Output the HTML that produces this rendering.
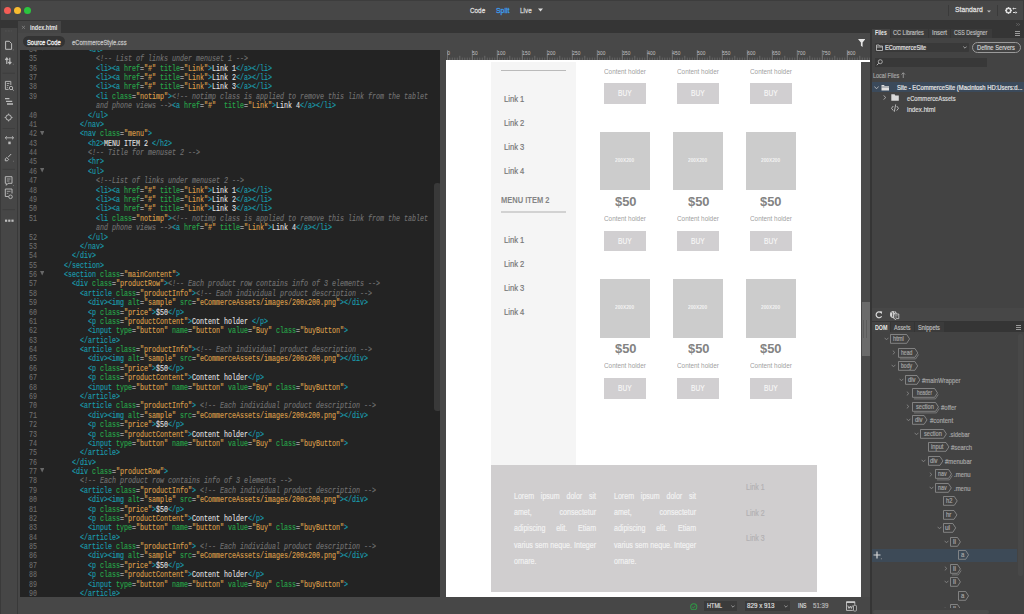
<!DOCTYPE html>
<html><head><meta charset="utf-8">
<style>
*{margin:0;padding:0;box-sizing:border-box}
html,body{width:1024px;height:614px;overflow:hidden;background:#474747;font-family:"Liberation Sans",sans-serif}
.a{position:absolute}
div,svg{position:absolute}
#title{left:0;top:0;width:1024px;height:20px;background:#474747;border-top:1px solid #3d3d3d;border-left:1px solid #3b3b3b}
.tl{width:7px;height:7px;border-radius:50%;top:7px}
.tt{font-size:8px;top:6px;color:#dcdcdc;line-height:9px;white-space:nowrap}
#strip{left:0;top:20px;width:870px;height:13px;background:#353535}
#doctab{left:18px;top:21px;width:43px;height:12px;background:#454545}
#toolbar{left:0;top:28px;width:16.6px;height:586px;background:#464646;border-left:1.2px solid #3a3a3a}
#tbline{left:16.6px;top:28px;width:1.4px;height:586px;background:#393939}
#relbar{left:17.8px;top:33px;width:852.2px;height:17px;background:#484848}
#pill{left:23px;top:36px;width:42px;height:11px;border-radius:6px;background:#333333}
#code{left:20px;top:50px;width:420px;height:547px;background:#232323;overflow:hidden}
.ln{left:17.2px;width:20px;text-align:right;font-family:"Liberation Mono",monospace;font-size:8.8px;line-height:9px;height:9px;color:#6e6e6e;margin-top:-2.2px;white-space:pre;-webkit-text-stroke:0.1px currentColor;transform:scaleX(0.7576);transform-origin:right center}
.fd{left:40px;font-size:4px;line-height:9px;color:#777;margin-top:-4.5px}
.cl{font-family:"Liberation Mono",monospace;font-size:8.8px;line-height:9px;height:9px;margin-top:-2.2px;white-space:pre;color:#e6e6e6;-webkit-text-stroke:0.15px currentColor;transform:scaleX(0.7576);transform-origin:left center}
.cl i{font-style:normal}
.cl .t{color:#1a9cae}
.cl .a{color:#27a64a;position:static}
.cl .e{color:#ababab}
.cl .v{color:#d99e4b}
.cl .x{color:#e2e2e2;-webkit-text-stroke:0.1px currentColor}
.cl .c{color:#717171;font-style:italic}
#cscroll{display:none}
#cthumb{left:414px;top:132.8px;width:6.5px;height:228.7px;background:#393939;border-radius:3px}
#divider{left:440px;top:50px;width:6.5px;height:547px;background:#474747}
#ruler{left:446.5px;top:50px;width:423.5px;height:10px;background:#474747;overflow:hidden}
.rl{top:1px;font-size:4.8px;line-height:5px;color:#c4c4c4;letter-spacing:0.05px}
#page{left:446.2px;top:60px;width:414.5px;height:537px;background:#fff;overflow:hidden}
#wline{left:446.2px;top:60px;width:423.5px;height:1.5px;background:#fff}
#dscroll{left:861px;top:61.5px;width:9px;height:535.5px;background:#4a4a4a}
#dthumb{left:861.5px;top:302px;width:8px;height:54px;background:#6b6b6b}
#pdiv{left:870px;top:20px;width:2px;height:594px;background:#353535}
#panel{left:872px;top:20px;width:152px;height:594px;background:#434343}
#status{left:18px;top:597px;width:852px;height:17px;background:#474747}
.sidebar{left:45.1px;top:1px;width:84.6px;height:404.4px;background:#f5f5f5}
.lk{font-size:8.6px;color:#7c7c7c;line-height:10px;white-space:nowrap}
.ch{width:60px;text-align:center;font-size:7.3px;line-height:11px;color:#a2a2a2;letter-spacing:-0.25px;white-space:nowrap}
.buy{width:42px;height:20.7px;background:#d1cfd1;color:#f4f4f4;font-size:9px;line-height:20.7px;text-align:center}
.img{width:50px;height:58.5px;background:#cccccc}
.img span{position:absolute;left:0;width:50px;top:24px;text-align:center;font-size:4px;line-height:6px;color:#f0f0f0;font-weight:bold}
.price{width:60px;text-align:center;font-size:13.5px;line-height:16px;font-weight:bold;color:#7f7f7f;letter-spacing:-0.3px}
.foot{left:44.5px;top:405.4px;width:325.9px;height:126.6px;background:#d0cecf}
.lorem{width:104.5px;font-size:9px;line-height:9px;color:#f3f3f3;-webkit-text-stroke:0.2px currentColor;text-align:justify;white-space:nowrap;transform:scaleX(0.785);transform-origin:0 0}
.flk{font-size:8px;color:#b5b3b5;line-height:10px;letter-spacing:-0.2px}
.ptxt{font-size:6.4px;line-height:8px;color:#c8c8c8;white-space:nowrap}
.chev{position:absolute}
.tagbox{position:absolute}
.tagtxt{font-size:6.2px;line-height:9px;color:#a8a8a8;text-align:center;white-space:nowrap}
.domlbl{font-size:6.8px;line-height:11px;color:#a8a8a8;white-space:nowrap}
.ico{position:absolute}
</style></head><body>
<!-- title bar -->
<div id="title"></div>
<div class="tl" style="left:4px;background:#f45d56"></div>
<div class="tl" style="left:14px;background:#f8bc30"></div>
<div class="tl" style="left:24px;background:#2bc53f"></div>
<svg style="left:538px;top:8.3px" width="5" height="4" viewBox="0 0 5 4"><path d="M0 0.5H5L2.5 3.5Z" fill="#dcdcdc"/></svg>
<div style="left:948px;top:5px;width:1px;height:11px;background:#3a3a3a"></div>
<div style="left:997px;top:5px;width:1px;height:11px;background:#3a3a3a"></div>
<svg style="left:987px;top:9.5px" width="4" height="3" viewBox="0 0 4 3"><path d="M0 0.5H4L2 2.5Z" fill="#bbbbbb"/></svg>
<svg style="left:1004px;top:5px" width="16" height="11" viewBox="0 0 16 11"><g transform="translate(4.5 5.5)"><circle r="2.25" fill="none" stroke="#dedede" stroke-width="1.5"/><g fill="#dedede"><rect x="-0.6" y="-3.4" width="1.2" height="1.3" transform="rotate(0)"/><rect x="-0.6" y="-3.4" width="1.2" height="1.3" transform="rotate(45)"/><rect x="-0.6" y="-3.4" width="1.2" height="1.3" transform="rotate(90)"/><rect x="-0.6" y="-3.4" width="1.2" height="1.3" transform="rotate(135)"/><rect x="-0.6" y="-3.4" width="1.2" height="1.3" transform="rotate(180)"/><rect x="-0.6" y="-3.4" width="1.2" height="1.3" transform="rotate(225)"/><rect x="-0.6" y="-3.4" width="1.2" height="1.3" transform="rotate(270)"/><rect x="-0.6" y="-3.4" width="1.2" height="1.3" transform="rotate(315)"/></g></g><path d="M8.2 3.6L10 2.4V4.8Z M9.6 3.2H12.2V4H9.6Z M13.4 7.5L11.4 6.3V8.7Z M9 7.1H11.8V7.9H9Z" fill="#dedede"/></svg>
<div style="left:1023px;top:0;width:1px;height:20px;background:#3a3a3a"></div>

<!-- tab strip -->
<div id="strip"></div>
<div id="doctab"></div>
<svg style="left:21px;top:24.5px" width="5" height="5" viewBox="0 0 5 5"><path d="M0.9 0.8L4 3.9M4 0.8L0.9 3.9" stroke="#8c8c8c" stroke-width="0.7"/></svg>

<!-- left toolbar -->
<div id="toolbar"></div>
<div id="tbline"></div>
<svg style="left:0;top:0" width="17" height="230" viewBox="0 0 17 230">
<g fill="none" stroke="#bdbdbd">
<path d="M5 31H12" stroke="#5a5a5a" stroke-width="0.8" stroke-dasharray="0.8 0.7"/>
<path d="M5.6 41.3H9.3L11.6 43.6V49.3H5.6Z" stroke-width="1"/>
<path d="M6.8 64V58.3M5.3 59.8L6.8 58L8.3 59.8M9.8 57.8V63.5M8.3 62L9.8 63.8L11.3 62" stroke-width="1.2"/>
<path d="M2.5 73.3H15" stroke="#3c3c3c" stroke-width="0.8"/>
<path d="M10.8 85V81.4H5.4V89.4H8.6" stroke-width="0.9"/>
<path d="M6.8 83.5H9.4M6.8 85.5H8.6M6.8 87.4H7.8" stroke-width="0.8"/>
<circle cx="11" cy="88" r="1.7" stroke-width="0.9"/><path d="M12.2 89.2L13.6 90.5" stroke-width="1"/>
<path d="M5 98.6H9.4M6 101.3H12.2M7 104H13" stroke-width="1.3"/>
<circle cx="8.6" cy="117.5" r="2.7" stroke-width="1"/>
<path d="M8.6 113.6V114.8M8.6 120.2V121.4M4.7 117.5H5.9M11.3 117.5H12.5" stroke-width="1"/>
<path d="M2.5 128.5H15" stroke="#3c3c3c" stroke-width="0.8"/>
<path d="M5.3 137.8H13.5" stroke-width="0.9"/>
<path d="M6.8 136.3L5.2 137.8L6.8 139.3M12 136.3L13.6 137.8L12 139.3" stroke-width="0.9"/>
<path d="M11.2 154L8 157.3M6.8 157.6L8.7 159.5L7.3 160.8H5.3V158.8Z" stroke-width="1"/>
<path d="M2.5 169.4H15" stroke="#3c3c3c" stroke-width="0.8"/>
<path d="M5.3 176.7H12V183.3H8L6.3 185.3V183.3H5.3Z" stroke-width="0.95"/>
<path d="M6.8 179H10.5M6.8 181H9.5" stroke-width="0.75"/>
<path d="M5.3 196.5V189H12V193.5M8.6 196.5H5.3" stroke-width="0.95"/>
<path d="M6.8 191.3H10.5M6.8 193.3H8.3" stroke-width="0.75"/>
<circle cx="10.5" cy="196.8" r="1.8" stroke-width="0.9"/>
<path d="M2.5 209.6H15" stroke="#3c3c3c" stroke-width="0.8"/>
</g>
<g fill="#bdbdbd">
<rect x="8.3" y="141.6" width="2.4" height="2.6"/>
<path d="M12.6 50.3H13.6V49.3Z M12.6 64.5H13.6V63.5Z M12.8 161.6H13.8V160.6Z M12.8 186H13.8V185Z" fill="#9a9a9a"/>
<rect x="5" y="219.6" width="2.2" height="2.2"/><rect x="8.2" y="219.6" width="2.2" height="2.2"/><rect x="11.4" y="219.6" width="2.2" height="2.2"/>
</g>
</svg>

<!-- related files bar -->
<div id="relbar"></div>
<div id="pill"></div>
<svg style="left:857.5px;top:39px" width="7.5" height="8" viewBox="0 0 7.5 8"><path d="M0 0H7.5L4.6 3.6V8L2.9 6.8V3.6Z" fill="#e6e6e6"/></svg>

<div style="left:469.80px;top:6.86px;font:normal 8.00px/8.00px 'Liberation Sans';color:#dcdcdc;white-space:pre;transform:scaleX(0.793);transform-origin:0 0;-webkit-text-stroke:0.3px currentColor;">Code</div>
<div style="left:495.80px;top:6.86px;font:normal 8.00px/8.00px 'Liberation Sans';color:#3d9ef0;white-space:pre;transform:scaleX(0.857);transform-origin:0 0;-webkit-text-stroke:0.3px currentColor;">Split</div>
<div style="left:519.80px;top:6.86px;font:normal 8.00px/8.00px 'Liberation Sans';color:#d0d0d0;white-space:pre;transform:scaleX(0.795);transform-origin:0 0;-webkit-text-stroke:0.3px currentColor;">Live</div>
<div style="left:954.80px;top:6.46px;font:normal 8.00px/8.00px 'Liberation Sans';color:#dddddd;white-space:pre;transform:scaleX(0.853);transform-origin:0 0;-webkit-text-stroke:0.3px currentColor;">Standard</div>
<div style="left:29.80px;top:23.64px;font:bold 7.00px/7.00px 'Liberation Sans';color:#e8e8e8;white-space:pre;transform:scaleX(0.782);transform-origin:0 0;">index.html</div>
<div style="left:26.70px;top:38.65px;font:normal 7.40px/7.40px 'Liberation Sans';color:#ececec;white-space:pre;transform:scaleX(0.779);transform-origin:0 0;-webkit-text-stroke:0.3px currentColor;">Source Code</div>
<div style="left:72.20px;top:38.65px;font:normal 7.40px/7.40px 'Liberation Sans';color:#bdbdbd;white-space:pre;transform:scaleX(0.781);transform-origin:0 0;-webkit-text-stroke:0.3px currentColor;">eCommerceStyle.css</div>
<!-- code view -->
<div id="code">
<div style="left:-20px;top:-50px;width:440px;height:647px">
<div class="ln" style="top:48.12px">34</div>
<svg style="left:40.1px;top:46.32px" width="4.4" height="4.6" viewBox="0 0 4.4 4.6"><path d="M0 0H4.4L2.2 4.6Z" fill="#686868"/></svg>
<div class="cl" style="top:48.12px;left:87.70px"><i class="t">&lt;ul</i><i class="t">&gt;</i></div>
<div class="ln" style="top:57.50px">35</div>
<div class="cl" style="top:57.50px;left:95.70px"><i class="c">&lt;!-- List of links under menuset 1 --&gt;</i></div>
<div class="ln" style="top:66.88px">36</div>
<div class="cl" style="top:66.88px;left:95.70px"><i class="t">&lt;li</i><i class="t">&gt;</i><i class="t">&lt;a</i> <i class="a">href</i><i class="e">=</i><i class="v">"#"</i> <i class="a">title</i><i class="e">=</i><i class="v">"Link"</i><i class="t">&gt;</i><i class="x">Link 1</i><i class="t">&lt;/a</i><i class="t">&gt;</i><i class="t">&lt;/li</i><i class="t">&gt;</i></div>
<div class="ln" style="top:76.26px">37</div>
<div class="cl" style="top:76.26px;left:95.70px"><i class="t">&lt;li</i><i class="t">&gt;</i><i class="t">&lt;a</i> <i class="a">href</i><i class="e">=</i><i class="v">"#"</i> <i class="a">title</i><i class="e">=</i><i class="v">"Link"</i><i class="t">&gt;</i><i class="x">Link 2</i><i class="t">&lt;/a</i><i class="t">&gt;</i><i class="t">&lt;/li</i><i class="t">&gt;</i></div>
<div class="ln" style="top:85.64px">38</div>
<div class="cl" style="top:85.64px;left:95.70px"><i class="t">&lt;li</i><i class="t">&gt;</i><i class="t">&lt;a</i> <i class="a">href</i><i class="e">=</i><i class="v">"#"</i> <i class="a">title</i><i class="e">=</i><i class="v">"Link"</i><i class="t">&gt;</i><i class="x">Link 3</i><i class="t">&lt;/a</i><i class="t">&gt;</i><i class="t">&lt;/li</i><i class="t">&gt;</i></div>
<div class="ln" style="top:95.02px">39</div>
<div class="cl" style="top:95.02px;left:95.70px"><i class="t">&lt;li</i> <i class="a">class</i><i class="e">=</i><i class="v">"notimp"</i><i class="t">&gt;</i><i class="c">&lt;!-- notimp class is applied to remove this link from the tablet</i></div>
<div class="cl" style="top:104.40px;left:95.70px"><i class="c">and phone views --&gt;</i><i class="t">&lt;a</i> <i class="a">href</i><i class="e">=</i><i class="v">"#"</i>  <i class="a">title</i><i class="e">=</i><i class="v">"Link"</i><i class="t">&gt;</i><i class="x">Link 4</i><i class="t">&lt;/a</i><i class="t">&gt;</i><i class="t">&lt;/li</i><i class="t">&gt;</i></div>
<div class="ln" style="top:113.78px">40</div>
<div class="cl" style="top:113.78px;left:87.70px"><i class="t">&lt;/ul</i><i class="t">&gt;</i></div>
<div class="ln" style="top:123.16px">41</div>
<div class="cl" style="top:123.16px;left:79.70px"><i class="t">&lt;/nav</i><i class="t">&gt;</i></div>
<div class="ln" style="top:132.54px">42</div>
<svg style="left:40.1px;top:130.74px" width="4.4" height="4.6" viewBox="0 0 4.4 4.6"><path d="M0 0H4.4L2.2 4.6Z" fill="#686868"/></svg>
<div class="cl" style="top:132.54px;left:79.70px"><i class="t">&lt;nav</i> <i class="a">class</i><i class="e">=</i><i class="v">"menu"</i><i class="t">&gt;</i></div>
<div class="ln" style="top:141.92px">43</div>
<div class="cl" style="top:141.92px;left:87.70px"><i class="t">&lt;h2</i><i class="t">&gt;</i><i class="x">MENU ITEM 2 </i><i class="t">&lt;/h2</i><i class="t">&gt;</i></div>
<div class="ln" style="top:151.30px">44</div>
<div class="cl" style="top:151.30px;left:87.70px"><i class="c">&lt;!-- Title for menuset 2 --&gt;</i></div>
<div class="ln" style="top:160.68px">45</div>
<div class="cl" style="top:160.68px;left:87.70px"><i class="t">&lt;hr</i><i class="t">&gt;</i></div>
<div class="ln" style="top:170.06px">46</div>
<svg style="left:40.1px;top:168.26px" width="4.4" height="4.6" viewBox="0 0 4.4 4.6"><path d="M0 0H4.4L2.2 4.6Z" fill="#686868"/></svg>
<div class="cl" style="top:170.06px;left:87.70px"><i class="t">&lt;ul</i><i class="t">&gt;</i></div>
<div class="ln" style="top:179.44px">47</div>
<div class="cl" style="top:179.44px;left:95.70px"><i class="c">&lt;!--List of links under menuset 2 --&gt;</i></div>
<div class="ln" style="top:188.82px">48</div>
<div class="cl" style="top:188.82px;left:95.70px"><i class="t">&lt;li</i><i class="t">&gt;</i><i class="t">&lt;a</i> <i class="a">href</i><i class="e">=</i><i class="v">"#"</i> <i class="a">title</i><i class="e">=</i><i class="v">"Link"</i><i class="t">&gt;</i><i class="x">Link 1</i><i class="t">&lt;/a</i><i class="t">&gt;</i><i class="t">&lt;/li</i><i class="t">&gt;</i></div>
<div class="ln" style="top:198.20px">49</div>
<div class="cl" style="top:198.20px;left:95.70px"><i class="t">&lt;li</i><i class="t">&gt;</i><i class="t">&lt;a</i> <i class="a">href</i><i class="e">=</i><i class="v">"#"</i> <i class="a">title</i><i class="e">=</i><i class="v">"Link"</i><i class="t">&gt;</i><i class="x">Link 2</i><i class="t">&lt;/a</i><i class="t">&gt;</i><i class="t">&lt;/li</i><i class="t">&gt;</i></div>
<div class="ln" style="top:207.58px">50</div>
<div class="cl" style="top:207.58px;left:95.70px"><i class="t">&lt;li</i><i class="t">&gt;</i><i class="t">&lt;a</i> <i class="a">href</i><i class="e">=</i><i class="v">"#"</i> <i class="a">title</i><i class="e">=</i><i class="v">"Link"</i><i class="t">&gt;</i><i class="x">Link 3</i><i class="t">&lt;/a</i><i class="t">&gt;</i><i class="t">&lt;/li</i><i class="t">&gt;</i></div>
<div class="ln" style="top:216.96px">51</div>
<div class="cl" style="top:216.96px;left:95.70px"><i class="t">&lt;li</i> <i class="a">class</i><i class="e">=</i><i class="v">"notimp"</i><i class="t">&gt;</i><i class="c">&lt;!-- notimp class is applied to remove this link from the tablet</i></div>
<div class="cl" style="top:226.34px;left:95.70px"><i class="c">and phone views --&gt;</i><i class="t">&lt;a</i> <i class="a">href</i><i class="e">=</i><i class="v">"#"</i> <i class="a">title</i><i class="e">=</i><i class="v">"Link"</i><i class="t">&gt;</i><i class="x">Link 4</i><i class="t">&lt;/a</i><i class="t">&gt;</i><i class="t">&lt;/li</i><i class="t">&gt;</i></div>
<div class="ln" style="top:235.72px">52</div>
<div class="cl" style="top:235.72px;left:87.70px"><i class="t">&lt;/ul</i><i class="t">&gt;</i></div>
<div class="ln" style="top:245.10px">53</div>
<div class="cl" style="top:245.10px;left:79.70px"><i class="t">&lt;/nav</i><i class="t">&gt;</i></div>
<div class="ln" style="top:254.48px">54</div>
<div class="cl" style="top:254.48px;left:71.70px"><i class="t">&lt;/div</i><i class="t">&gt;</i></div>
<div class="ln" style="top:263.86px">55</div>
<div class="cl" style="top:263.86px;left:63.70px"><i class="t">&lt;/section</i><i class="t">&gt;</i></div>
<div class="ln" style="top:273.24px">56</div>
<svg style="left:40.1px;top:271.44px" width="4.4" height="4.6" viewBox="0 0 4.4 4.6"><path d="M0 0H4.4L2.2 4.6Z" fill="#686868"/></svg>
<div class="cl" style="top:273.24px;left:63.70px"><i class="t">&lt;section</i> <i class="a">class</i><i class="e">=</i><i class="v">"mainContent"</i><i class="t">&gt;</i></div>
<div class="ln" style="top:282.62px">57</div>
<div class="cl" style="top:282.62px;left:71.70px"><i class="t">&lt;div</i> <i class="a">class</i><i class="e">=</i><i class="v">"productRow"</i><i class="t">&gt;</i><i class="c">&lt;!-- Each product row contains info of 3 elements --&gt;</i></div>
<div class="ln" style="top:292.00px">58</div>
<div class="cl" style="top:292.00px;left:79.70px"><i class="t">&lt;article</i> <i class="a">class</i><i class="e">=</i><i class="v">"productInfo"</i><i class="t">&gt;</i><i class="c">&lt;!-- Each individual product description --&gt;</i></div>
<div class="ln" style="top:301.38px">59</div>
<div class="cl" style="top:301.38px;left:87.70px"><i class="t">&lt;div</i><i class="t">&gt;</i><i class="t">&lt;img</i> <i class="a">alt</i><i class="e">=</i><i class="v">"sample"</i> <i class="a">src</i><i class="e">=</i><i class="v">"eCommerceAssets/images/200x200.png"</i><i class="t">&gt;</i><i class="t">&lt;/div</i><i class="t">&gt;</i></div>
<div class="ln" style="top:310.76px">60</div>
<div class="cl" style="top:310.76px;left:87.70px"><i class="t">&lt;p</i> <i class="a">class</i><i class="e">=</i><i class="v">"price"</i><i class="t">&gt;</i><i class="x">$50</i><i class="t">&lt;/p</i><i class="t">&gt;</i></div>
<div class="ln" style="top:320.14px">61</div>
<div class="cl" style="top:320.14px;left:87.70px"><i class="t">&lt;p</i> <i class="a">class</i><i class="e">=</i><i class="v">"productContent"</i><i class="t">&gt;</i><i class="x">Content holder </i><i class="t">&lt;/p</i><i class="t">&gt;</i></div>
<div class="ln" style="top:329.52px">62</div>
<div class="cl" style="top:329.52px;left:87.70px"><i class="t">&lt;input</i> <i class="a">type</i><i class="e">=</i><i class="v">"button"</i> <i class="a">name</i><i class="e">=</i><i class="v">"button"</i> <i class="a">value</i><i class="e">=</i><i class="v">"Buy"</i> <i class="a">class</i><i class="e">=</i><i class="v">"buyButton"</i><i class="t">&gt;</i></div>
<div class="ln" style="top:338.90px">63</div>
<div class="cl" style="top:338.90px;left:79.70px"><i class="t">&lt;/article</i><i class="t">&gt;</i></div>
<div class="ln" style="top:348.28px">64</div>
<div class="cl" style="top:348.28px;left:79.70px"><i class="t">&lt;article</i> <i class="a">class</i><i class="e">=</i><i class="v">"productInfo"</i><i class="t">&gt;</i><i class="c">&lt;!-- Each individual product description --&gt;</i></div>
<div class="ln" style="top:357.66px">65</div>
<div class="cl" style="top:357.66px;left:87.70px"><i class="t">&lt;div</i><i class="t">&gt;</i><i class="t">&lt;img</i> <i class="a">alt</i><i class="e">=</i><i class="v">"sample"</i> <i class="a">src</i><i class="e">=</i><i class="v">"eCommerceAssets/images/200x200.png"</i><i class="t">&gt;</i><i class="t">&lt;/div</i><i class="t">&gt;</i></div>
<div class="ln" style="top:367.04px">66</div>
<div class="cl" style="top:367.04px;left:87.70px"><i class="t">&lt;p</i> <i class="a">class</i><i class="e">=</i><i class="v">"price"</i><i class="t">&gt;</i><i class="x">$50</i><i class="t">&lt;/p</i><i class="t">&gt;</i></div>
<div class="ln" style="top:376.42px">67</div>
<div class="cl" style="top:376.42px;left:87.70px"><i class="t">&lt;p</i> <i class="a">class</i><i class="e">=</i><i class="v">"productContent"</i><i class="t">&gt;</i><i class="x">Content holder</i><i class="t">&lt;/p</i><i class="t">&gt;</i></div>
<div class="ln" style="top:385.80px">68</div>
<div class="cl" style="top:385.80px;left:87.70px"><i class="t">&lt;input</i> <i class="a">type</i><i class="e">=</i><i class="v">"button"</i> <i class="a">name</i><i class="e">=</i><i class="v">"button"</i> <i class="a">value</i><i class="e">=</i><i class="v">"Buy"</i> <i class="a">class</i><i class="e">=</i><i class="v">"buyButton"</i><i class="t">&gt;</i></div>
<div class="ln" style="top:395.18px">69</div>
<div class="cl" style="top:395.18px;left:79.70px"><i class="t">&lt;/article</i><i class="t">&gt;</i></div>
<div class="ln" style="top:404.56px">70</div>
<div class="cl" style="top:404.56px;left:79.70px"><i class="t">&lt;article</i> <i class="a">class</i><i class="e">=</i><i class="v">"productInfo"</i><i class="t">&gt;</i><i class="x"> </i><i class="c">&lt;!-- Each individual product description --&gt;</i></div>
<div class="ln" style="top:413.94px">71</div>
<div class="cl" style="top:413.94px;left:87.70px"><i class="t">&lt;div</i><i class="t">&gt;</i><i class="t">&lt;img</i> <i class="a">alt</i><i class="e">=</i><i class="v">"sample"</i> <i class="a">src</i><i class="e">=</i><i class="v">"eCommerceAssets/images/200x200.png"</i><i class="t">&gt;</i><i class="t">&lt;/div</i><i class="t">&gt;</i></div>
<div class="ln" style="top:423.32px">72</div>
<div class="cl" style="top:423.32px;left:87.70px"><i class="t">&lt;p</i> <i class="a">class</i><i class="e">=</i><i class="v">"price"</i><i class="t">&gt;</i><i class="x">$50</i><i class="t">&lt;/p</i><i class="t">&gt;</i></div>
<div class="ln" style="top:432.70px">73</div>
<div class="cl" style="top:432.70px;left:87.70px"><i class="t">&lt;p</i> <i class="a">class</i><i class="e">=</i><i class="v">"productContent"</i><i class="t">&gt;</i><i class="x">Content holder</i><i class="t">&lt;/p</i><i class="t">&gt;</i></div>
<div class="ln" style="top:442.08px">74</div>
<div class="cl" style="top:442.08px;left:87.70px"><i class="t">&lt;input</i> <i class="a">type</i><i class="e">=</i><i class="v">"button"</i> <i class="a">name</i><i class="e">=</i><i class="v">"button"</i> <i class="a">value</i><i class="e">=</i><i class="v">"Buy"</i> <i class="a">class</i><i class="e">=</i><i class="v">"buyButton"</i><i class="t">&gt;</i></div>
<div class="ln" style="top:451.46px">75</div>
<div class="cl" style="top:451.46px;left:79.70px"><i class="t">&lt;/article</i><i class="t">&gt;</i></div>
<div class="ln" style="top:460.84px">76</div>
<div class="cl" style="top:460.84px;left:71.70px"><i class="t">&lt;/div</i><i class="t">&gt;</i></div>
<div class="ln" style="top:470.22px">77</div>
<svg style="left:40.1px;top:468.42px" width="4.4" height="4.6" viewBox="0 0 4.4 4.6"><path d="M0 0H4.4L2.2 4.6Z" fill="#686868"/></svg>
<div class="cl" style="top:470.22px;left:71.70px"><i class="t">&lt;div</i> <i class="a">class</i><i class="e">=</i><i class="v">"productRow"</i><i class="t">&gt;</i></div>
<div class="ln" style="top:479.60px">78</div>
<div class="cl" style="top:479.60px;left:79.70px"><i class="c">&lt;!-- Each product row contains info of 3 elements --&gt;</i></div>
<div class="ln" style="top:488.98px">79</div>
<div class="cl" style="top:488.98px;left:79.70px"><i class="t">&lt;article</i> <i class="a">class</i><i class="e">=</i><i class="v">"productInfo"</i><i class="t">&gt;</i><i class="x"> </i><i class="c">&lt;!-- Each individual product description --&gt;</i></div>
<div class="ln" style="top:498.36px">80</div>
<div class="cl" style="top:498.36px;left:87.70px"><i class="t">&lt;div</i><i class="t">&gt;</i><i class="t">&lt;img</i> <i class="a">alt</i><i class="e">=</i><i class="v">"sample"</i> <i class="a">src</i><i class="e">=</i><i class="v">"eCommerceAssets/images/200x200.png"</i><i class="t">&gt;</i><i class="t">&lt;/div</i><i class="t">&gt;</i></div>
<div class="ln" style="top:507.74px">81</div>
<div class="cl" style="top:507.74px;left:87.70px"><i class="t">&lt;p</i> <i class="a">class</i><i class="e">=</i><i class="v">"price"</i><i class="t">&gt;</i><i class="x">$50</i><i class="t">&lt;/p</i><i class="t">&gt;</i></div>
<div class="ln" style="top:517.12px">82</div>
<div class="cl" style="top:517.12px;left:87.70px"><i class="t">&lt;p</i> <i class="a">class</i><i class="e">=</i><i class="v">"productContent"</i><i class="t">&gt;</i><i class="x">Content holder</i><i class="t">&lt;/p</i><i class="t">&gt;</i></div>
<div class="ln" style="top:526.50px">83</div>
<div class="cl" style="top:526.50px;left:87.70px"><i class="t">&lt;input</i> <i class="a">type</i><i class="e">=</i><i class="v">"button"</i> <i class="a">name</i><i class="e">=</i><i class="v">"button"</i> <i class="a">value</i><i class="e">=</i><i class="v">"Buy"</i> <i class="a">class</i><i class="e">=</i><i class="v">"buyButton"</i><i class="t">&gt;</i></div>
<div class="ln" style="top:535.88px">84</div>
<div class="cl" style="top:535.88px;left:79.70px"><i class="t">&lt;/article</i><i class="t">&gt;</i></div>
<div class="ln" style="top:545.26px">85</div>
<div class="cl" style="top:545.26px;left:79.70px"><i class="t">&lt;article</i> <i class="a">class</i><i class="e">=</i><i class="v">"productInfo"</i><i class="t">&gt;</i><i class="x"> </i><i class="c">&lt;!-- Each individual product description --&gt;</i></div>
<div class="ln" style="top:554.64px">86</div>
<div class="cl" style="top:554.64px;left:87.70px"><i class="t">&lt;div</i><i class="t">&gt;</i><i class="t">&lt;img</i> <i class="a">alt</i><i class="e">=</i><i class="v">"sample"</i> <i class="a">src</i><i class="e">=</i><i class="v">"eCommerceAssets/images/200x200.png"</i><i class="t">&gt;</i><i class="t">&lt;/div</i><i class="t">&gt;</i></div>
<div class="ln" style="top:564.02px">87</div>
<div class="cl" style="top:564.02px;left:87.70px"><i class="t">&lt;p</i> <i class="a">class</i><i class="e">=</i><i class="v">"price"</i><i class="t">&gt;</i><i class="x">$50</i><i class="t">&lt;/p</i><i class="t">&gt;</i></div>
<div class="ln" style="top:573.40px">88</div>
<div class="cl" style="top:573.40px;left:87.70px"><i class="t">&lt;p</i> <i class="a">class</i><i class="e">=</i><i class="v">"productContent"</i><i class="t">&gt;</i><i class="x">Content holder</i><i class="t">&lt;/p</i><i class="t">&gt;</i></div>
<div class="ln" style="top:582.78px">89</div>
<div class="cl" style="top:582.78px;left:87.70px"><i class="t">&lt;input</i> <i class="a">type</i><i class="e">=</i><i class="v">"button"</i> <i class="a">name</i><i class="e">=</i><i class="v">"button"</i> <i class="a">value</i><i class="e">=</i><i class="v">"Buy"</i> <i class="a">class</i><i class="e">=</i><i class="v">"buyButton"</i><i class="t">&gt;</i></div>
<div class="ln" style="top:592.16px">90</div>
<div class="cl" style="top:592.16px;left:79.70px"><i class="t">&lt;/article</i><i class="t">&gt;</i></div>
</div>
<div id="cscroll"></div>
<div id="cthumb"></div>
</div>

<div id="divider"></div>

<!-- ruler -->
<div id="ruler">
<svg style="left:0;top:0" width="424" height="10" viewBox="0 0 424 10">
<line x1="0.30" y1="0" x2="0.30" y2="10" stroke="#a0a0a0" stroke-width="0.55"/>
<line x1="2.80" y1="7.6" x2="2.80" y2="10" stroke="#858585" stroke-width="0.5"/>
<line x1="5.30" y1="7.6" x2="5.30" y2="10" stroke="#858585" stroke-width="0.5"/>
<line x1="7.80" y1="7.6" x2="7.80" y2="10" stroke="#858585" stroke-width="0.5"/>
<line x1="10.30" y1="7.6" x2="10.30" y2="10" stroke="#858585" stroke-width="0.5"/>
<line x1="12.80" y1="5.8" x2="12.80" y2="10" stroke="#8c8c8c" stroke-width="0.5"/>
<line x1="15.30" y1="7.6" x2="15.30" y2="10" stroke="#858585" stroke-width="0.5"/>
<line x1="17.80" y1="7.6" x2="17.80" y2="10" stroke="#858585" stroke-width="0.5"/>
<line x1="20.30" y1="7.6" x2="20.30" y2="10" stroke="#858585" stroke-width="0.5"/>
<line x1="22.80" y1="7.6" x2="22.80" y2="10" stroke="#858585" stroke-width="0.5"/>
<line x1="25.30" y1="0" x2="25.30" y2="10" stroke="#a0a0a0" stroke-width="0.55"/>
<line x1="27.80" y1="7.6" x2="27.80" y2="10" stroke="#858585" stroke-width="0.5"/>
<line x1="30.30" y1="7.6" x2="30.30" y2="10" stroke="#858585" stroke-width="0.5"/>
<line x1="32.80" y1="7.6" x2="32.80" y2="10" stroke="#858585" stroke-width="0.5"/>
<line x1="35.30" y1="7.6" x2="35.30" y2="10" stroke="#858585" stroke-width="0.5"/>
<line x1="37.80" y1="5.8" x2="37.80" y2="10" stroke="#8c8c8c" stroke-width="0.5"/>
<line x1="40.30" y1="7.6" x2="40.30" y2="10" stroke="#858585" stroke-width="0.5"/>
<line x1="42.80" y1="7.6" x2="42.80" y2="10" stroke="#858585" stroke-width="0.5"/>
<line x1="45.30" y1="7.6" x2="45.30" y2="10" stroke="#858585" stroke-width="0.5"/>
<line x1="47.80" y1="7.6" x2="47.80" y2="10" stroke="#858585" stroke-width="0.5"/>
<line x1="50.30" y1="0" x2="50.30" y2="10" stroke="#a0a0a0" stroke-width="0.55"/>
<line x1="52.80" y1="7.6" x2="52.80" y2="10" stroke="#858585" stroke-width="0.5"/>
<line x1="55.30" y1="7.6" x2="55.30" y2="10" stroke="#858585" stroke-width="0.5"/>
<line x1="57.80" y1="7.6" x2="57.80" y2="10" stroke="#858585" stroke-width="0.5"/>
<line x1="60.30" y1="7.6" x2="60.30" y2="10" stroke="#858585" stroke-width="0.5"/>
<line x1="62.80" y1="5.8" x2="62.80" y2="10" stroke="#8c8c8c" stroke-width="0.5"/>
<line x1="65.30" y1="7.6" x2="65.30" y2="10" stroke="#858585" stroke-width="0.5"/>
<line x1="67.80" y1="7.6" x2="67.80" y2="10" stroke="#858585" stroke-width="0.5"/>
<line x1="70.30" y1="7.6" x2="70.30" y2="10" stroke="#858585" stroke-width="0.5"/>
<line x1="72.80" y1="7.6" x2="72.80" y2="10" stroke="#858585" stroke-width="0.5"/>
<line x1="75.30" y1="0" x2="75.30" y2="10" stroke="#a0a0a0" stroke-width="0.55"/>
<line x1="77.80" y1="7.6" x2="77.80" y2="10" stroke="#858585" stroke-width="0.5"/>
<line x1="80.30" y1="7.6" x2="80.30" y2="10" stroke="#858585" stroke-width="0.5"/>
<line x1="82.80" y1="7.6" x2="82.80" y2="10" stroke="#858585" stroke-width="0.5"/>
<line x1="85.30" y1="7.6" x2="85.30" y2="10" stroke="#858585" stroke-width="0.5"/>
<line x1="87.80" y1="5.8" x2="87.80" y2="10" stroke="#8c8c8c" stroke-width="0.5"/>
<line x1="90.30" y1="7.6" x2="90.30" y2="10" stroke="#858585" stroke-width="0.5"/>
<line x1="92.80" y1="7.6" x2="92.80" y2="10" stroke="#858585" stroke-width="0.5"/>
<line x1="95.30" y1="7.6" x2="95.30" y2="10" stroke="#858585" stroke-width="0.5"/>
<line x1="97.80" y1="7.6" x2="97.80" y2="10" stroke="#858585" stroke-width="0.5"/>
<line x1="100.30" y1="0" x2="100.30" y2="10" stroke="#a0a0a0" stroke-width="0.55"/>
<line x1="102.80" y1="7.6" x2="102.80" y2="10" stroke="#858585" stroke-width="0.5"/>
<line x1="105.30" y1="7.6" x2="105.30" y2="10" stroke="#858585" stroke-width="0.5"/>
<line x1="107.80" y1="7.6" x2="107.80" y2="10" stroke="#858585" stroke-width="0.5"/>
<line x1="110.30" y1="7.6" x2="110.30" y2="10" stroke="#858585" stroke-width="0.5"/>
<line x1="112.80" y1="5.8" x2="112.80" y2="10" stroke="#8c8c8c" stroke-width="0.5"/>
<line x1="115.30" y1="7.6" x2="115.30" y2="10" stroke="#858585" stroke-width="0.5"/>
<line x1="117.80" y1="7.6" x2="117.80" y2="10" stroke="#858585" stroke-width="0.5"/>
<line x1="120.30" y1="7.6" x2="120.30" y2="10" stroke="#858585" stroke-width="0.5"/>
<line x1="122.80" y1="7.6" x2="122.80" y2="10" stroke="#858585" stroke-width="0.5"/>
<line x1="125.30" y1="0" x2="125.30" y2="10" stroke="#a0a0a0" stroke-width="0.55"/>
<line x1="127.80" y1="7.6" x2="127.80" y2="10" stroke="#858585" stroke-width="0.5"/>
<line x1="130.30" y1="7.6" x2="130.30" y2="10" stroke="#858585" stroke-width="0.5"/>
<line x1="132.80" y1="7.6" x2="132.80" y2="10" stroke="#858585" stroke-width="0.5"/>
<line x1="135.30" y1="7.6" x2="135.30" y2="10" stroke="#858585" stroke-width="0.5"/>
<line x1="137.80" y1="5.8" x2="137.80" y2="10" stroke="#8c8c8c" stroke-width="0.5"/>
<line x1="140.30" y1="7.6" x2="140.30" y2="10" stroke="#858585" stroke-width="0.5"/>
<line x1="142.80" y1="7.6" x2="142.80" y2="10" stroke="#858585" stroke-width="0.5"/>
<line x1="145.30" y1="7.6" x2="145.30" y2="10" stroke="#858585" stroke-width="0.5"/>
<line x1="147.80" y1="7.6" x2="147.80" y2="10" stroke="#858585" stroke-width="0.5"/>
<line x1="150.30" y1="0" x2="150.30" y2="10" stroke="#a0a0a0" stroke-width="0.55"/>
<line x1="152.80" y1="7.6" x2="152.80" y2="10" stroke="#858585" stroke-width="0.5"/>
<line x1="155.30" y1="7.6" x2="155.30" y2="10" stroke="#858585" stroke-width="0.5"/>
<line x1="157.80" y1="7.6" x2="157.80" y2="10" stroke="#858585" stroke-width="0.5"/>
<line x1="160.30" y1="7.6" x2="160.30" y2="10" stroke="#858585" stroke-width="0.5"/>
<line x1="162.80" y1="5.8" x2="162.80" y2="10" stroke="#8c8c8c" stroke-width="0.5"/>
<line x1="165.30" y1="7.6" x2="165.30" y2="10" stroke="#858585" stroke-width="0.5"/>
<line x1="167.80" y1="7.6" x2="167.80" y2="10" stroke="#858585" stroke-width="0.5"/>
<line x1="170.30" y1="7.6" x2="170.30" y2="10" stroke="#858585" stroke-width="0.5"/>
<line x1="172.80" y1="7.6" x2="172.80" y2="10" stroke="#858585" stroke-width="0.5"/>
<line x1="175.30" y1="0" x2="175.30" y2="10" stroke="#a0a0a0" stroke-width="0.55"/>
<line x1="177.80" y1="7.6" x2="177.80" y2="10" stroke="#858585" stroke-width="0.5"/>
<line x1="180.30" y1="7.6" x2="180.30" y2="10" stroke="#858585" stroke-width="0.5"/>
<line x1="182.80" y1="7.6" x2="182.80" y2="10" stroke="#858585" stroke-width="0.5"/>
<line x1="185.30" y1="7.6" x2="185.30" y2="10" stroke="#858585" stroke-width="0.5"/>
<line x1="187.80" y1="5.8" x2="187.80" y2="10" stroke="#8c8c8c" stroke-width="0.5"/>
<line x1="190.30" y1="7.6" x2="190.30" y2="10" stroke="#858585" stroke-width="0.5"/>
<line x1="192.80" y1="7.6" x2="192.80" y2="10" stroke="#858585" stroke-width="0.5"/>
<line x1="195.30" y1="7.6" x2="195.30" y2="10" stroke="#858585" stroke-width="0.5"/>
<line x1="197.80" y1="7.6" x2="197.80" y2="10" stroke="#858585" stroke-width="0.5"/>
<line x1="200.30" y1="0" x2="200.30" y2="10" stroke="#a0a0a0" stroke-width="0.55"/>
<line x1="202.80" y1="7.6" x2="202.80" y2="10" stroke="#858585" stroke-width="0.5"/>
<line x1="205.30" y1="7.6" x2="205.30" y2="10" stroke="#858585" stroke-width="0.5"/>
<line x1="207.80" y1="7.6" x2="207.80" y2="10" stroke="#858585" stroke-width="0.5"/>
<line x1="210.30" y1="7.6" x2="210.30" y2="10" stroke="#858585" stroke-width="0.5"/>
<line x1="212.80" y1="5.8" x2="212.80" y2="10" stroke="#8c8c8c" stroke-width="0.5"/>
<line x1="215.30" y1="7.6" x2="215.30" y2="10" stroke="#858585" stroke-width="0.5"/>
<line x1="217.80" y1="7.6" x2="217.80" y2="10" stroke="#858585" stroke-width="0.5"/>
<line x1="220.30" y1="7.6" x2="220.30" y2="10" stroke="#858585" stroke-width="0.5"/>
<line x1="222.80" y1="7.6" x2="222.80" y2="10" stroke="#858585" stroke-width="0.5"/>
<line x1="225.30" y1="0" x2="225.30" y2="10" stroke="#a0a0a0" stroke-width="0.55"/>
<line x1="227.80" y1="7.6" x2="227.80" y2="10" stroke="#858585" stroke-width="0.5"/>
<line x1="230.30" y1="7.6" x2="230.30" y2="10" stroke="#858585" stroke-width="0.5"/>
<line x1="232.80" y1="7.6" x2="232.80" y2="10" stroke="#858585" stroke-width="0.5"/>
<line x1="235.30" y1="7.6" x2="235.30" y2="10" stroke="#858585" stroke-width="0.5"/>
<line x1="237.80" y1="5.8" x2="237.80" y2="10" stroke="#8c8c8c" stroke-width="0.5"/>
<line x1="240.30" y1="7.6" x2="240.30" y2="10" stroke="#858585" stroke-width="0.5"/>
<line x1="242.80" y1="7.6" x2="242.80" y2="10" stroke="#858585" stroke-width="0.5"/>
<line x1="245.30" y1="7.6" x2="245.30" y2="10" stroke="#858585" stroke-width="0.5"/>
<line x1="247.80" y1="7.6" x2="247.80" y2="10" stroke="#858585" stroke-width="0.5"/>
<line x1="250.30" y1="0" x2="250.30" y2="10" stroke="#a0a0a0" stroke-width="0.55"/>
<line x1="252.80" y1="7.6" x2="252.80" y2="10" stroke="#858585" stroke-width="0.5"/>
<line x1="255.30" y1="7.6" x2="255.30" y2="10" stroke="#858585" stroke-width="0.5"/>
<line x1="257.80" y1="7.6" x2="257.80" y2="10" stroke="#858585" stroke-width="0.5"/>
<line x1="260.30" y1="7.6" x2="260.30" y2="10" stroke="#858585" stroke-width="0.5"/>
<line x1="262.80" y1="5.8" x2="262.80" y2="10" stroke="#8c8c8c" stroke-width="0.5"/>
<line x1="265.30" y1="7.6" x2="265.30" y2="10" stroke="#858585" stroke-width="0.5"/>
<line x1="267.80" y1="7.6" x2="267.80" y2="10" stroke="#858585" stroke-width="0.5"/>
<line x1="270.30" y1="7.6" x2="270.30" y2="10" stroke="#858585" stroke-width="0.5"/>
<line x1="272.80" y1="7.6" x2="272.80" y2="10" stroke="#858585" stroke-width="0.5"/>
<line x1="275.30" y1="0" x2="275.30" y2="10" stroke="#a0a0a0" stroke-width="0.55"/>
<line x1="277.80" y1="7.6" x2="277.80" y2="10" stroke="#858585" stroke-width="0.5"/>
<line x1="280.30" y1="7.6" x2="280.30" y2="10" stroke="#858585" stroke-width="0.5"/>
<line x1="282.80" y1="7.6" x2="282.80" y2="10" stroke="#858585" stroke-width="0.5"/>
<line x1="285.30" y1="7.6" x2="285.30" y2="10" stroke="#858585" stroke-width="0.5"/>
<line x1="287.80" y1="5.8" x2="287.80" y2="10" stroke="#8c8c8c" stroke-width="0.5"/>
<line x1="290.30" y1="7.6" x2="290.30" y2="10" stroke="#858585" stroke-width="0.5"/>
<line x1="292.80" y1="7.6" x2="292.80" y2="10" stroke="#858585" stroke-width="0.5"/>
<line x1="295.30" y1="7.6" x2="295.30" y2="10" stroke="#858585" stroke-width="0.5"/>
<line x1="297.80" y1="7.6" x2="297.80" y2="10" stroke="#858585" stroke-width="0.5"/>
<line x1="300.30" y1="0" x2="300.30" y2="10" stroke="#a0a0a0" stroke-width="0.55"/>
<line x1="302.80" y1="7.6" x2="302.80" y2="10" stroke="#858585" stroke-width="0.5"/>
<line x1="305.30" y1="7.6" x2="305.30" y2="10" stroke="#858585" stroke-width="0.5"/>
<line x1="307.80" y1="7.6" x2="307.80" y2="10" stroke="#858585" stroke-width="0.5"/>
<line x1="310.30" y1="7.6" x2="310.30" y2="10" stroke="#858585" stroke-width="0.5"/>
<line x1="312.80" y1="5.8" x2="312.80" y2="10" stroke="#8c8c8c" stroke-width="0.5"/>
<line x1="315.30" y1="7.6" x2="315.30" y2="10" stroke="#858585" stroke-width="0.5"/>
<line x1="317.80" y1="7.6" x2="317.80" y2="10" stroke="#858585" stroke-width="0.5"/>
<line x1="320.30" y1="7.6" x2="320.30" y2="10" stroke="#858585" stroke-width="0.5"/>
<line x1="322.80" y1="7.6" x2="322.80" y2="10" stroke="#858585" stroke-width="0.5"/>
<line x1="325.30" y1="0" x2="325.30" y2="10" stroke="#a0a0a0" stroke-width="0.55"/>
<line x1="327.80" y1="7.6" x2="327.80" y2="10" stroke="#858585" stroke-width="0.5"/>
<line x1="330.30" y1="7.6" x2="330.30" y2="10" stroke="#858585" stroke-width="0.5"/>
<line x1="332.80" y1="7.6" x2="332.80" y2="10" stroke="#858585" stroke-width="0.5"/>
<line x1="335.30" y1="7.6" x2="335.30" y2="10" stroke="#858585" stroke-width="0.5"/>
<line x1="337.80" y1="5.8" x2="337.80" y2="10" stroke="#8c8c8c" stroke-width="0.5"/>
<line x1="340.30" y1="7.6" x2="340.30" y2="10" stroke="#858585" stroke-width="0.5"/>
<line x1="342.80" y1="7.6" x2="342.80" y2="10" stroke="#858585" stroke-width="0.5"/>
<line x1="345.30" y1="7.6" x2="345.30" y2="10" stroke="#858585" stroke-width="0.5"/>
<line x1="347.80" y1="7.6" x2="347.80" y2="10" stroke="#858585" stroke-width="0.5"/>
<line x1="350.30" y1="0" x2="350.30" y2="10" stroke="#a0a0a0" stroke-width="0.55"/>
<line x1="352.80" y1="7.6" x2="352.80" y2="10" stroke="#858585" stroke-width="0.5"/>
<line x1="355.30" y1="7.6" x2="355.30" y2="10" stroke="#858585" stroke-width="0.5"/>
<line x1="357.80" y1="7.6" x2="357.80" y2="10" stroke="#858585" stroke-width="0.5"/>
<line x1="360.30" y1="7.6" x2="360.30" y2="10" stroke="#858585" stroke-width="0.5"/>
<line x1="362.80" y1="5.8" x2="362.80" y2="10" stroke="#8c8c8c" stroke-width="0.5"/>
<line x1="365.30" y1="7.6" x2="365.30" y2="10" stroke="#858585" stroke-width="0.5"/>
<line x1="367.80" y1="7.6" x2="367.80" y2="10" stroke="#858585" stroke-width="0.5"/>
<line x1="370.30" y1="7.6" x2="370.30" y2="10" stroke="#858585" stroke-width="0.5"/>
<line x1="372.80" y1="7.6" x2="372.80" y2="10" stroke="#858585" stroke-width="0.5"/>
<line x1="375.30" y1="0" x2="375.30" y2="10" stroke="#a0a0a0" stroke-width="0.55"/>
<line x1="377.80" y1="7.6" x2="377.80" y2="10" stroke="#858585" stroke-width="0.5"/>
<line x1="380.30" y1="7.6" x2="380.30" y2="10" stroke="#858585" stroke-width="0.5"/>
<line x1="382.80" y1="7.6" x2="382.80" y2="10" stroke="#858585" stroke-width="0.5"/>
<line x1="385.30" y1="7.6" x2="385.30" y2="10" stroke="#858585" stroke-width="0.5"/>
<line x1="387.80" y1="5.8" x2="387.80" y2="10" stroke="#8c8c8c" stroke-width="0.5"/>
<line x1="390.30" y1="7.6" x2="390.30" y2="10" stroke="#858585" stroke-width="0.5"/>
<line x1="392.80" y1="7.6" x2="392.80" y2="10" stroke="#858585" stroke-width="0.5"/>
<line x1="395.30" y1="7.6" x2="395.30" y2="10" stroke="#858585" stroke-width="0.5"/>
<line x1="397.80" y1="7.6" x2="397.80" y2="10" stroke="#858585" stroke-width="0.5"/>
<line x1="400.30" y1="0" x2="400.30" y2="10" stroke="#a0a0a0" stroke-width="0.55"/>
<line x1="402.80" y1="7.6" x2="402.80" y2="10" stroke="#858585" stroke-width="0.5"/>
<line x1="405.30" y1="7.6" x2="405.30" y2="10" stroke="#858585" stroke-width="0.5"/>
<line x1="407.80" y1="7.6" x2="407.80" y2="10" stroke="#858585" stroke-width="0.5"/>
<line x1="410.30" y1="7.6" x2="410.30" y2="10" stroke="#858585" stroke-width="0.5"/>
<line x1="412.80" y1="5.8" x2="412.80" y2="10" stroke="#8c8c8c" stroke-width="0.5"/>
<line x1="415.30" y1="7.6" x2="415.30" y2="10" stroke="#858585" stroke-width="0.5"/>
<line x1="417.80" y1="7.6" x2="417.80" y2="10" stroke="#858585" stroke-width="0.5"/>
<line x1="420.30" y1="7.6" x2="420.30" y2="10" stroke="#858585" stroke-width="0.5"/>
<line x1="422.80" y1="7.6" x2="422.80" y2="10" stroke="#858585" stroke-width="0.5"/>
</svg>
<div class="rl" style="left:0.80px">0</div>
<div class="rl" style="left:25.80px">50</div>
<div class="rl" style="left:50.80px">100</div>
<div class="rl" style="left:75.80px">150</div>
<div class="rl" style="left:100.80px">200</div>
<div class="rl" style="left:125.80px">250</div>
<div class="rl" style="left:150.80px">300</div>
<div class="rl" style="left:175.80px">350</div>
<div class="rl" style="left:200.80px">400</div>
<div class="rl" style="left:225.80px">450</div>
<div class="rl" style="left:250.80px">500</div>
<div class="rl" style="left:275.80px">550</div>
<div class="rl" style="left:300.80px">600</div>
<div class="rl" style="left:325.80px">650</div>
<div class="rl" style="left:350.80px">700</div>
<div class="rl" style="left:375.80px">750</div>
<div class="rl" style="left:400.80px">800</div>
</div>

<!-- design page -->
<div id="page">
<div class="sidebar"></div>
<div style="left:54.8px;top:9.8px;width:65px;height:1.2px;background:#bababa"></div>
<div style="left:54.8px;top:151.3px;width:65px;height:1.8px;background:#d2d2d2"></div>
<div class="foot"></div>
<div class="lorem" style="left:68.00px;top:431.78px;text-align-last:justify">Lorem ipsum dolor sit</div>
<div class="lorem" style="left:68.00px;top:448.13px;text-align-last:justify">amet, consectetur</div>
<div class="lorem" style="left:68.00px;top:464.48px;text-align-last:justify">adipiscing elit. Etiam</div>
<div class="lorem" style="left:68.00px;top:480.83px;text-align-last:justify">varius sem neque. Integer</div>
<div class="lorem" style="left:68.00px;top:497.18px;text-align-last:left">ornare.</div>
<div class="lorem" style="left:167.70px;top:431.78px;text-align-last:justify">Lorem ipsum dolor sit</div>
<div class="lorem" style="left:167.70px;top:448.13px;text-align-last:justify">amet, consectetur</div>
<div class="lorem" style="left:167.70px;top:464.48px;text-align-last:justify">adipiscing elit. Etiam</div>
<div class="lorem" style="left:167.70px;top:480.83px;text-align-last:justify">varius sem neque. Integer</div>
<div class="lorem" style="left:167.70px;top:497.18px;text-align-last:left">ornare.</div>
</div>
<div style="left:503.70px;top:95.18px;font:normal 9.00px/9.00px 'Liberation Sans';color:#777777;white-space:pre;transform:scaleX(0.845);transform-origin:0 0;-webkit-text-stroke:0.2px currentColor;">Link 1</div>
<div style="left:503.70px;top:119.18px;font:normal 9.00px/9.00px 'Liberation Sans';color:#777777;white-space:pre;transform:scaleX(0.845);transform-origin:0 0;-webkit-text-stroke:0.2px currentColor;">Link 2</div>
<div style="left:503.70px;top:143.18px;font:normal 9.00px/9.00px 'Liberation Sans';color:#777777;white-space:pre;transform:scaleX(0.845);transform-origin:0 0;-webkit-text-stroke:0.2px currentColor;">Link 3</div>
<div style="left:503.70px;top:167.18px;font:normal 9.00px/9.00px 'Liberation Sans';color:#777777;white-space:pre;transform:scaleX(0.845);transform-origin:0 0;-webkit-text-stroke:0.2px currentColor;">Link 4</div>
<div style="left:501.00px;top:194.90px;font:bold 9.80px/9.80px 'Liberation Sans';color:#858585;white-space:pre;transform:scaleX(0.769);transform-origin:0 0;">MENU ITEM 2</div>
<div style="left:503.70px;top:236.38px;font:normal 9.00px/9.00px 'Liberation Sans';color:#777777;white-space:pre;transform:scaleX(0.845);transform-origin:0 0;-webkit-text-stroke:0.2px currentColor;">Link 1</div>
<div style="left:503.70px;top:260.38px;font:normal 9.00px/9.00px 'Liberation Sans';color:#777777;white-space:pre;transform:scaleX(0.845);transform-origin:0 0;-webkit-text-stroke:0.2px currentColor;">Link 2</div>
<div style="left:503.70px;top:284.38px;font:normal 9.00px/9.00px 'Liberation Sans';color:#777777;white-space:pre;transform:scaleX(0.845);transform-origin:0 0;-webkit-text-stroke:0.2px currentColor;">Link 3</div>
<div style="left:503.70px;top:308.38px;font:normal 9.00px/9.00px 'Liberation Sans';color:#777777;white-space:pre;transform:scaleX(0.845);transform-origin:0 0;-webkit-text-stroke:0.2px currentColor;">Link 4</div>
<div style="left:745.70px;top:483.27px;font:normal 8.40px/8.40px 'Liberation Sans';color:#b3b1b3;white-space:pre;transform:scaleX(0.833);transform-origin:0 0;-webkit-text-stroke:0.2px currentColor;">Link 1</div>
<div style="left:745.70px;top:508.87px;font:normal 8.40px/8.40px 'Liberation Sans';color:#b3b1b3;white-space:pre;transform:scaleX(0.833);transform-origin:0 0;-webkit-text-stroke:0.2px currentColor;">Link 2</div>
<div style="left:745.70px;top:534.47px;font:normal 8.40px/8.40px 'Liberation Sans';color:#b3b1b3;white-space:pre;transform:scaleX(0.833);transform-origin:0 0;-webkit-text-stroke:0.2px currentColor;">Link 3</div>
<div id="wline"></div>
<div style="left:604.10px;top:68.25px;font:normal 7.60px/7.60px 'Liberation Sans';color:#a0a0a0;white-space:pre;transform:scaleX(0.839);transform-origin:0 0;">Content holder</div>
<div class="buy" style="left:604.10px;top:83.1px"></div>
<div style="left:618.20px;top:87.99px;font:normal 9.60px/9.60px 'Liberation Sans';color:#f7f7f7;white-space:pre;transform:scaleX(0.689);transform-origin:0 0;-webkit-text-stroke:0.2px currentColor;">BUY</div>
<div style="left:676.90px;top:68.25px;font:normal 7.60px/7.60px 'Liberation Sans';color:#a0a0a0;white-space:pre;transform:scaleX(0.839);transform-origin:0 0;">Content holder</div>
<div class="buy" style="left:676.90px;top:83.1px"></div>
<div style="left:691.00px;top:87.99px;font:normal 9.60px/9.60px 'Liberation Sans';color:#f7f7f7;white-space:pre;transform:scaleX(0.689);transform-origin:0 0;-webkit-text-stroke:0.2px currentColor;">BUY</div>
<div style="left:749.50px;top:68.25px;font:normal 7.60px/7.60px 'Liberation Sans';color:#a0a0a0;white-space:pre;transform:scaleX(0.839);transform-origin:0 0;">Content holder</div>
<div class="buy" style="left:749.50px;top:83.1px"></div>
<div style="left:763.60px;top:87.99px;font:normal 9.60px/9.60px 'Liberation Sans';color:#f7f7f7;white-space:pre;transform:scaleX(0.689);transform-origin:0 0;-webkit-text-stroke:0.2px currentColor;">BUY</div>
<div class="img" style="left:600.20px;top:131.90px"></div>
<div style="left:615.40px;top:158.89px;font:bold 4.60px/4.60px 'Liberation Sans';color:#f2f2f2;white-space:pre;transform:scaleX(1.040);transform-origin:0 0;">200X200</div>
<div style="left:614.70px;top:194.67px;font:bold 13.60px/13.60px 'Liberation Sans';color:#838383;white-space:pre;transform:scaleX(0.949);transform-origin:0 0;">$50</div>
<div style="left:604.10px;top:214.75px;font:normal 7.60px/7.60px 'Liberation Sans';color:#a0a0a0;white-space:pre;transform:scaleX(0.839);transform-origin:0 0;">Content holder</div>
<div class="buy" style="left:604.10px;top:230.70px"></div>
<div style="left:618.20px;top:235.59px;font:normal 9.60px/9.60px 'Liberation Sans';color:#f7f7f7;white-space:pre;transform:scaleX(0.689);transform-origin:0 0;-webkit-text-stroke:0.2px currentColor;">BUY</div>
<div class="img" style="left:673.00px;top:131.90px"></div>
<div style="left:688.20px;top:158.89px;font:bold 4.60px/4.60px 'Liberation Sans';color:#f2f2f2;white-space:pre;transform:scaleX(1.040);transform-origin:0 0;">200X200</div>
<div style="left:687.50px;top:194.67px;font:bold 13.60px/13.60px 'Liberation Sans';color:#838383;white-space:pre;transform:scaleX(0.949);transform-origin:0 0;">$50</div>
<div style="left:676.90px;top:214.75px;font:normal 7.60px/7.60px 'Liberation Sans';color:#a0a0a0;white-space:pre;transform:scaleX(0.839);transform-origin:0 0;">Content holder</div>
<div class="buy" style="left:676.90px;top:230.70px"></div>
<div style="left:691.00px;top:235.59px;font:normal 9.60px/9.60px 'Liberation Sans';color:#f7f7f7;white-space:pre;transform:scaleX(0.689);transform-origin:0 0;-webkit-text-stroke:0.2px currentColor;">BUY</div>
<div class="img" style="left:745.60px;top:131.90px"></div>
<div style="left:760.80px;top:158.89px;font:bold 4.60px/4.60px 'Liberation Sans';color:#f2f2f2;white-space:pre;transform:scaleX(1.040);transform-origin:0 0;">200X200</div>
<div style="left:760.10px;top:194.67px;font:bold 13.60px/13.60px 'Liberation Sans';color:#838383;white-space:pre;transform:scaleX(0.949);transform-origin:0 0;">$50</div>
<div style="left:749.50px;top:214.75px;font:normal 7.60px/7.60px 'Liberation Sans';color:#a0a0a0;white-space:pre;transform:scaleX(0.839);transform-origin:0 0;">Content holder</div>
<div class="buy" style="left:749.50px;top:230.70px"></div>
<div style="left:763.60px;top:235.59px;font:normal 9.60px/9.60px 'Liberation Sans';color:#f7f7f7;white-space:pre;transform:scaleX(0.689);transform-origin:0 0;-webkit-text-stroke:0.2px currentColor;">BUY</div>
<div class="img" style="left:600.20px;top:279.30px"></div>
<div style="left:615.40px;top:306.29px;font:bold 4.60px/4.60px 'Liberation Sans';color:#f2f2f2;white-space:pre;transform:scaleX(1.040);transform-origin:0 0;">200X200</div>
<div style="left:614.70px;top:342.07px;font:bold 13.60px/13.60px 'Liberation Sans';color:#838383;white-space:pre;transform:scaleX(0.949);transform-origin:0 0;">$50</div>
<div style="left:604.10px;top:362.15px;font:normal 7.60px/7.60px 'Liberation Sans';color:#a0a0a0;white-space:pre;transform:scaleX(0.839);transform-origin:0 0;">Content holder</div>
<div class="buy" style="left:604.10px;top:378.10px"></div>
<div style="left:618.20px;top:382.99px;font:normal 9.60px/9.60px 'Liberation Sans';color:#f7f7f7;white-space:pre;transform:scaleX(0.689);transform-origin:0 0;-webkit-text-stroke:0.2px currentColor;">BUY</div>
<div class="img" style="left:673.00px;top:279.30px"></div>
<div style="left:688.20px;top:306.29px;font:bold 4.60px/4.60px 'Liberation Sans';color:#f2f2f2;white-space:pre;transform:scaleX(1.040);transform-origin:0 0;">200X200</div>
<div style="left:687.50px;top:342.07px;font:bold 13.60px/13.60px 'Liberation Sans';color:#838383;white-space:pre;transform:scaleX(0.949);transform-origin:0 0;">$50</div>
<div style="left:676.90px;top:362.15px;font:normal 7.60px/7.60px 'Liberation Sans';color:#a0a0a0;white-space:pre;transform:scaleX(0.839);transform-origin:0 0;">Content holder</div>
<div class="buy" style="left:676.90px;top:378.10px"></div>
<div style="left:691.00px;top:382.99px;font:normal 9.60px/9.60px 'Liberation Sans';color:#f7f7f7;white-space:pre;transform:scaleX(0.689);transform-origin:0 0;-webkit-text-stroke:0.2px currentColor;">BUY</div>
<div class="img" style="left:745.60px;top:279.30px"></div>
<div style="left:760.80px;top:306.29px;font:bold 4.60px/4.60px 'Liberation Sans';color:#f2f2f2;white-space:pre;transform:scaleX(1.040);transform-origin:0 0;">200X200</div>
<div style="left:760.10px;top:342.07px;font:bold 13.60px/13.60px 'Liberation Sans';color:#838383;white-space:pre;transform:scaleX(0.949);transform-origin:0 0;">$50</div>
<div style="left:749.50px;top:362.15px;font:normal 7.60px/7.60px 'Liberation Sans';color:#a0a0a0;white-space:pre;transform:scaleX(0.839);transform-origin:0 0;">Content holder</div>
<div class="buy" style="left:749.50px;top:378.10px"></div>
<div style="left:763.60px;top:382.99px;font:normal 9.60px/9.60px 'Liberation Sans';color:#f7f7f7;white-space:pre;transform:scaleX(0.689);transform-origin:0 0;-webkit-text-stroke:0.2px currentColor;">BUY</div>
<div id="dscroll"></div>
<div id="dthumb"></div>
<div style="left:863.2px;top:320px;width:4px;height:18px;background-image:repeating-linear-gradient(to right,#5c5c5c 0,#5c5c5c 0.6px,transparent 0.6px,transparent 1.5px)"></div>

<!-- status bar -->
<div id="status"></div>
<svg style="left:690px;top:602.5px" width="7.5" height="7.5" viewBox="0 0 8 8"><circle cx="4" cy="4" r="3.3" fill="none" stroke="#2f9a45" stroke-width="1.1"/><path d="M2.3 4.1L3.6 5.3L5.8 2.9" fill="none" stroke="#2f9a45" stroke-width="1"/></svg>
<div style="left:704px;top:601px;width:32.6px;height:10px;background:#3b3b3b"></div>
<div style="left:706.90px;top:602.83px;font:normal 6.60px/6.60px 'Liberation Sans';color:#dedede;white-space:pre;transform:scaleX(0.842);transform-origin:0 0;-webkit-text-stroke:0.2px currentColor;">HTML</div>
<svg style="left:731px;top:604.8px" width="4" height="3" viewBox="0 0 4 3"><path d="M0.3 0.5L2 2.2L3.7 0.5" fill="none" stroke="#aaa" stroke-width="0.8"/></svg>
<div style="left:745px;top:601px;width:45.4px;height:10px;background:#3b3b3b"></div>
<div style="left:747.20px;top:602.83px;font:normal 6.60px/6.60px 'Liberation Sans';color:#dedede;white-space:pre;transform:scaleX(0.949);transform-origin:0 0;-webkit-text-stroke:0.2px currentColor;">829 x 913</div>
<svg style="left:784px;top:604.8px" width="4" height="3" viewBox="0 0 4 3"><path d="M0.3 0.5L2 2.2L3.7 0.5" fill="none" stroke="#aaa" stroke-width="0.8"/></svg>
<div style="left:797.80px;top:602.83px;font:normal 6.60px/6.60px 'Liberation Sans';color:#dedede;white-space:pre;transform:scaleX(0.768);transform-origin:0 0;-webkit-text-stroke:0.2px currentColor;">INS</div>
<div style="left:812.70px;top:602.83px;font:normal 6.60px/6.60px 'Liberation Sans';color:#b8b8b8;white-space:pre;transform:scaleX(0.933);transform-origin:0 0;-webkit-text-stroke:0.2px currentColor;">51:39</div>
<svg style="left:846px;top:601px" width="11" height="10.5" viewBox="0 0 11 10.5"><path d="M0.5 0.7H8.8V3.8M0.5 0.7V9.4H6.8" fill="none" stroke="#c4c4c4" stroke-width="0.9"/><path d="M0.5 1.3H8.8" stroke="#d6d6d6" stroke-width="1.2"/><path d="M1.8 4.6L3 7.4L4.3 5.2L5.4 7.4L6.4 4.6" fill="none" stroke="#d0d0d0" stroke-width="0.9"/><rect x="7.5" y="4.4" width="2.9" height="5.6" rx="0.6" fill="#3a3a3a" stroke="#c4c4c4" stroke-width="0.8"/></svg>

<!-- right panel -->
<div id="pdiv"></div>
<div id="panel"></div>
<div style="left:872px;top:20px;width:152px;height:8px;background:#353535"></div>
<svg style="left:1016px;top:22.5px" width="4" height="3" viewBox="0 0 4 3"><path d="M0.5 0.3L1.5 1.5L0.5 2.7M2.5 0.3L3.5 1.5L2.5 2.7" fill="none" stroke="#8a8a8a" stroke-width="0.6"/></svg>
<div style="left:872px;top:28px;width:152px;height:10px;background:#353535"></div>
<div style="left:890.8px;top:28.6px;width:37px;height:9.4px;background:#3b3b3b"></div>
<div style="left:928.7px;top:28.6px;width:21.2px;height:9.4px;background:#3b3b3b"></div>
<div style="left:950.7px;top:28.6px;width:41.5px;height:9.4px;background:#3b3b3b"></div>
<div style="left:872px;top:28.6px;width:18px;height:9.4px;background:#444444"></div>
<div style="left:875.00px;top:30.14px;font:bold 6.80px/6.80px 'Liberation Sans';color:#e9e9e9;white-space:pre;transform:scaleX(0.758);transform-origin:0 0;">Files</div>
<div style="left:893.40px;top:30.14px;font:normal 6.80px/6.80px 'Liberation Sans';color:#bdbdbd;white-space:pre;transform:scaleX(0.818);transform-origin:0 0;-webkit-text-stroke:0.2px currentColor;">CC Libraries</div>
<div style="left:931.70px;top:30.14px;font:normal 6.80px/6.80px 'Liberation Sans';color:#bdbdbd;white-space:pre;transform:scaleX(0.883);transform-origin:0 0;-webkit-text-stroke:0.2px currentColor;">Insert</div>
<div style="left:954.00px;top:30.14px;font:normal 6.80px/6.80px 'Liberation Sans';color:#bdbdbd;white-space:pre;transform:scaleX(0.772);transform-origin:0 0;-webkit-text-stroke:0.2px currentColor;">CSS Designer</div>
<div style="left:1015px;top:30.5px;width:4.5px;height:5px;background-image:repeating-linear-gradient(to bottom,#9a9a9a 0,#9a9a9a 1px,transparent 1px,transparent 2px)"></div>
<div style="left:874.7px;top:42.8px;width:94px;height:9.3px;background:#393939;border-radius:1px"></div>
<svg style="left:875.5px;top:43.7px" width="7" height="7" viewBox="0 0 7 7"><path d="M0.5 1H3L3.5 2H6.5V6.5H0.5Z M0.5 3H6.5" fill="none" stroke="#c8c8c8" stroke-width="0.8"/></svg>
<div style="left:884.80px;top:44.24px;font:normal 7.20px/7.20px 'Liberation Sans';color:#e2e2e2;white-space:pre;transform:scaleX(0.787);transform-origin:0 0;-webkit-text-stroke:0.2px currentColor;">ECommerceSite</div>
<svg style="left:963px;top:46px" width="4" height="3" viewBox="0 0 4 3"><path d="M0.3 0.5L2 2.2L3.7 0.5" fill="none" stroke="#bbb" stroke-width="0.8"/></svg>
<div style="left:972px;top:41.7px;width:49px;height:11.3px;border:0.9px solid #9a9a9a;border-radius:6px"></div>
<div style="left:977.30px;top:44.04px;font:normal 7.20px/7.20px 'Liberation Sans';color:#d2d2d2;white-space:pre;transform:scaleX(0.797);transform-origin:0 0;-webkit-text-stroke:0.2px currentColor;">Define Servers</div>
<div style="left:874.7px;top:57.8px;width:112.3px;height:9.4px;background:#383838"></div>
<svg style="left:876px;top:59px" width="7" height="7" viewBox="0 0 7 7"><circle cx="4.3" cy="2.7" r="2" fill="none" stroke="#c0c0c0" stroke-width="0.8"/><path d="M2.8 4.2L0.8 6.2" stroke="#c0c0c0" stroke-width="0.9"/></svg>
<div style="left:873.00px;top:71.94px;font:normal 7.20px/7.20px 'Liberation Sans';color:#a8a8a8;white-space:pre;transform:scaleX(0.762);transform-origin:0 0;-webkit-text-stroke:0.2px currentColor;">Local Files</div>
<svg style="left:901px;top:72px" width="4.5" height="6" viewBox="0 0 4.5 6"><path d="M2.25 1V6M0.5 2.5L2.25 0.7L4 2.5" fill="none" stroke="#a8a8a8" stroke-width="0.8"/></svg>
<div style="left:872px;top:81.9px;width:152px;height:10.1px;background:#3b4a5b"></div>
<svg style="left:874px;top:85.5px" width="5" height="3.5" viewBox="0 0 5 3.5"><path d="M0.4 0.5L2.5 2.8L4.6 0.5" fill="none" stroke="#c8c8c8" stroke-width="0.8"/></svg>
<svg style="left:881px;top:83.5px" width="8.5" height="7" viewBox="0 0 8.5 7"><path d="M0.5 1H3L3.7 2H8V6.5H0.5Z" fill="#e0e0e0"/><path d="M0.5 3H8" stroke="#3b4a5b" stroke-width="0.6"/></svg>
<div style="left:896.60px;top:83.54px;font:normal 7.20px/7.20px 'Liberation Sans';color:#e8e8e8;white-space:pre;transform:scaleX(0.818);transform-origin:0 0;-webkit-text-stroke:0.2px currentColor;">Site - ECommerceSite (Macintosh HD:Users:d...</div>
<svg style="left:882.5px;top:95.2px" width="3.5" height="5" viewBox="0 0 3.5 5"><path d="M0.5 0.4L2.8 2.5L0.5 4.6" fill="none" stroke="#bbb" stroke-width="0.8"/></svg>
<svg style="left:891px;top:93.8px" width="8.5" height="7" viewBox="0 0 8.5 7"><path d="M0.3 0.3H3.6L4.3 1.5H7.8V6.8H0.3Z" fill="#dadada"/></svg>
<div style="left:906.90px;top:95.04px;font:normal 7.20px/7.20px 'Liberation Sans';color:#dcdcdc;white-space:pre;transform:scaleX(0.800);transform-origin:0 0;-webkit-text-stroke:0.2px currentColor;">eCommerceAssets</div>
<svg style="left:891px;top:103.6px" width="8" height="8.2" viewBox="0 0 8 8.2"><path d="M2.3 2L0.5 4.3L2.3 6.6M5.7 2L7.5 4.3L5.7 6.6M4.7 0.4L3.3 7.8" fill="none" stroke="#d0d0d0" stroke-width="0.8"/></svg>
<div style="left:906.90px;top:106.14px;font:normal 7.20px/7.20px 'Liberation Sans';color:#dcdcdc;white-space:pre;transform:scaleX(0.868);transform-origin:0 0;-webkit-text-stroke:0.2px currentColor;">index.html</div>
<div style="left:872px;top:308.3px;width:152px;height:12.7px;background:#474747"></div>
<svg style="left:872px;top:308px" width="32" height="14" viewBox="0 0 32 14"><path d="M9.6 8.2A2.9 2.9 0 1 1 8.9 4.6" fill="none" stroke="#dcdcdc" stroke-width="1.2"/><path d="M7.6 3.2L10.2 3.6L9.6 6.2Z" fill="#dcdcdc"/><circle cx="21.4" cy="6.5" r="3.4" fill="#d6d6d6"/><path d="M19.6 3.6Q21.6 5.5 20.3 8.8M22.2 3.2Q21.8 5.3 24.2 5.6" fill="none" stroke="#474747" stroke-width="0.8"/><path d="M21.8 6H26.8V10.6H24.3L23.4 11.8L22.8 10.6H21.8Z" fill="#4a4a4a" stroke="#d6d6d6" stroke-width="0.8"/><path d="M22.9 7.7H25.7M22.9 9.1H25" stroke="#bdbdbd" stroke-width="0.6"/></svg>
<div style="left:872px;top:321px;width:152px;height:11.4px;background:#353535"></div>
<div style="left:891.1px;top:322.3px;width:22.6px;height:10.1px;background:#3b3b3b"></div>
<div style="left:914.5px;top:322.3px;width:29px;height:10.1px;background:#3b3b3b"></div>
<div style="left:872px;top:322.3px;width:18.4px;height:10.1px;background:#444444"></div>
<div style="left:874.90px;top:325.14px;font:bold 6.80px/6.80px 'Liberation Sans';color:#e9e9e9;white-space:pre;transform:scaleX(0.784);transform-origin:0 0;">DOM</div>
<div style="left:893.90px;top:325.14px;font:normal 6.80px/6.80px 'Liberation Sans';color:#bdbdbd;white-space:pre;transform:scaleX(0.805);transform-origin:0 0;-webkit-text-stroke:0.2px currentColor;">Assets</div>
<div style="left:917.70px;top:325.14px;font:normal 6.80px/6.80px 'Liberation Sans';color:#bdbdbd;white-space:pre;transform:scaleX(0.828);transform-origin:0 0;-webkit-text-stroke:0.2px currentColor;">Snippets</div>
<div style="left:1016px;top:324.5px;width:4.5px;height:5px;background-image:repeating-linear-gradient(to bottom,#9a9a9a 0,#9a9a9a 1px,transparent 1px,transparent 2px)"></div>
<div style="left:1017.5px;top:334px;width:5px;height:242px;background:#484848;border-radius:2px"></div>
<div style="left:871.6px;top:548.8px;width:145.2px;height:13.1px;background:#3d4a57"></div>
<svg style="left:873px;top:551px" width="9" height="9" viewBox="0 0 9 9"><path d="M4 0.5V7.5M0.5 4H7.5" stroke="#d8d8d8" stroke-width="1.2"/><circle cx="8.3" cy="7.8" r="0.5" fill="#aaa"/></svg>
<svg style="left:884.10px;top:337.28px" width="5" height="4" viewBox="0 0 5 4"><path d="M0.6 0.8L2.5 2.8L4.4 0.8" fill="none" stroke="#8e8e8e" stroke-width="0.8"/></svg>
<svg style="left:889.80px;top:334.18px" width="21.70" height="12" viewBox="0 0 21.70 12"><polygon points="0.5,0.5 16.70,0.5 19.60,4.90 16.70,9.30 0.5,9.30" fill="none" stroke="#939393" stroke-width="0.8"/></svg>
<div style="left:893.30px;top:336.12px;font:normal 6.80px/6.80px 'Liberation Sans';color:#a4a4a4;white-space:pre;transform:scaleX(0.848);transform-origin:0 0;-webkit-text-stroke:0.2px currentColor;">html</div>
<svg style="left:891.70px;top:350.08px" width="4" height="5" viewBox="0 0 4 5"><path d="M0.8 0.6L2.8 2.5L0.8 4.4" fill="none" stroke="#8e8e8e" stroke-width="0.8"/></svg>
<svg style="left:897.70px;top:347.68px" width="21.90" height="12" viewBox="0 0 21.90 12"><polyline points="1.9,10.90 17.70,10.90 20.60,6.50" fill="none" stroke="#8a8a8a" stroke-width="0.75"/><polygon points="0.5,0.5 16.90,0.5 19.80,4.90 16.90,9.30 0.5,9.30" fill="none" stroke="#939393" stroke-width="0.8"/></svg>
<div style="left:901.20px;top:349.62px;font:normal 6.80px/6.80px 'Liberation Sans';color:#a4a4a4;white-space:pre;transform:scaleX(0.750);transform-origin:0 0;-webkit-text-stroke:0.2px currentColor;">head</div>
<svg style="left:891.10px;top:364.29px" width="5" height="4" viewBox="0 0 5 4"><path d="M0.6 0.8L2.5 2.8L4.4 0.8" fill="none" stroke="#8e8e8e" stroke-width="0.8"/></svg>
<svg style="left:897.70px;top:361.19px" width="21.80" height="12" viewBox="0 0 21.80 12"><polygon points="0.5,0.5 16.80,0.5 19.70,4.90 16.80,9.30 0.5,9.30" fill="none" stroke="#939393" stroke-width="0.8"/></svg>
<div style="left:901.15px;top:363.12px;font:normal 6.80px/6.80px 'Liberation Sans';color:#a4a4a4;white-space:pre;transform:scaleX(0.750);transform-origin:0 0;-webkit-text-stroke:0.2px currentColor;">body</div>
<svg style="left:898.60px;top:377.79px" width="5" height="4" viewBox="0 0 5 4"><path d="M0.6 0.8L2.5 2.8L4.4 0.8" fill="none" stroke="#8e8e8e" stroke-width="0.8"/></svg>
<svg style="left:905.00px;top:374.69px" width="17.00" height="12" viewBox="0 0 17.00 12"><polygon points="0.5,0.5 12.00,0.5 14.90,4.90 12.00,9.30 0.5,9.30" fill="none" stroke="#939393" stroke-width="0.8"/></svg>
<div style="left:907.80px;top:376.63px;font:normal 6.80px/6.80px 'Liberation Sans';color:#a4a4a4;white-space:pre;transform:scaleX(0.861);transform-origin:0 0;-webkit-text-stroke:0.2px currentColor;">div</div>
<div style="left:922.30px;top:376.63px;font:normal 7.00px/7.00px 'Liberation Sans';color:#a4a4a4;white-space:pre;transform:scaleX(0.842);transform-origin:0 0;-webkit-text-stroke:0.2px currentColor;">#mainWrapper</div>
<svg style="left:906.30px;top:390.60px" width="4" height="5" viewBox="0 0 4 5"><path d="M0.8 0.6L2.8 2.5L0.8 4.4" fill="none" stroke="#8e8e8e" stroke-width="0.8"/></svg>
<svg style="left:912.40px;top:388.20px" width="27.60" height="12" viewBox="0 0 27.60 12"><polyline points="1.9,10.90 23.40,10.90 26.30,6.50" fill="none" stroke="#8a8a8a" stroke-width="0.75"/><polygon points="0.5,0.5 22.60,0.5 25.50,4.90 22.60,9.30 0.5,9.30" fill="none" stroke="#939393" stroke-width="0.8"/></svg>
<div style="left:916.75px;top:390.13px;font:normal 6.80px/6.80px 'Liberation Sans';color:#a4a4a4;white-space:pre;transform:scaleX(0.708);transform-origin:0 0;-webkit-text-stroke:0.2px currentColor;">header</div>
<svg style="left:906.30px;top:404.10px" width="4" height="5" viewBox="0 0 4 5"><path d="M0.8 0.6L2.8 2.5L0.8 4.4" fill="none" stroke="#8e8e8e" stroke-width="0.8"/></svg>
<svg style="left:912.40px;top:401.70px" width="28.60" height="12" viewBox="0 0 28.60 12"><polyline points="1.9,10.90 24.40,10.90 27.30,6.50" fill="none" stroke="#8a8a8a" stroke-width="0.75"/><polygon points="0.5,0.5 23.60,0.5 26.50,4.90 23.60,9.30 0.5,9.30" fill="none" stroke="#939393" stroke-width="0.8"/></svg>
<div style="left:916.00px;top:403.64px;font:normal 6.80px/6.80px 'Liberation Sans';color:#a4a4a4;white-space:pre;transform:scaleX(0.827);transform-origin:0 0;-webkit-text-stroke:0.2px currentColor;">section</div>
<div style="left:941.40px;top:403.64px;font:normal 7.00px/7.00px 'Liberation Sans';color:#a4a4a4;white-space:pre;transform:scaleX(0.857);transform-origin:0 0;-webkit-text-stroke:0.2px currentColor;">#offer</div>
<svg style="left:906.10px;top:418.30px" width="5" height="4" viewBox="0 0 5 4"><path d="M0.6 0.8L2.5 2.8L4.4 0.8" fill="none" stroke="#8e8e8e" stroke-width="0.8"/></svg>
<svg style="left:912.40px;top:415.20px" width="17.10" height="12" viewBox="0 0 17.10 12"><polygon points="0.5,0.5 12.10,0.5 15.00,4.90 12.10,9.30 0.5,9.30" fill="none" stroke="#939393" stroke-width="0.8"/></svg>
<div style="left:915.25px;top:417.14px;font:normal 6.80px/6.80px 'Liberation Sans';color:#a4a4a4;white-space:pre;transform:scaleX(0.861);transform-origin:0 0;-webkit-text-stroke:0.2px currentColor;">div</div>
<div style="left:930.00px;top:417.14px;font:normal 7.00px/7.00px 'Liberation Sans';color:#a4a4a4;white-space:pre;transform:scaleX(0.862);transform-origin:0 0;-webkit-text-stroke:0.2px currentColor;">#content</div>
<svg style="left:913.70px;top:431.81px" width="5" height="4" viewBox="0 0 5 4"><path d="M0.6 0.8L2.5 2.8L4.4 0.8" fill="none" stroke="#8e8e8e" stroke-width="0.8"/></svg>
<svg style="left:920.00px;top:428.71px" width="28.50" height="12" viewBox="0 0 28.50 12"><polygon points="0.5,0.5 23.50,0.5 26.40,4.90 23.50,9.30 0.5,9.30" fill="none" stroke="#939393" stroke-width="0.8"/></svg>
<div style="left:923.55px;top:430.64px;font:normal 6.80px/6.80px 'Liberation Sans';color:#a4a4a4;white-space:pre;transform:scaleX(0.827);transform-origin:0 0;-webkit-text-stroke:0.2px currentColor;">section</div>
<div style="left:949.00px;top:430.65px;font:normal 7.00px/7.00px 'Liberation Sans';color:#a4a4a4;white-space:pre;transform:scaleX(0.829);transform-origin:0 0;-webkit-text-stroke:0.2px currentColor;">.sidebar</div>
<svg style="left:927.50px;top:442.21px" width="23.00" height="12" viewBox="0 0 23.00 12"><polygon points="0.5,0.5 18.00,0.5 20.90,4.90 18.00,9.30 0.5,9.30" fill="none" stroke="#939393" stroke-width="0.8"/></svg>
<div style="left:931.05px;top:444.15px;font:normal 6.80px/6.80px 'Liberation Sans';color:#a4a4a4;white-space:pre;transform:scaleX(0.842);transform-origin:0 0;-webkit-text-stroke:0.2px currentColor;">input</div>
<div style="left:950.60px;top:444.15px;font:normal 7.00px/7.00px 'Liberation Sans';color:#a4a4a4;white-space:pre;transform:scaleX(0.848);transform-origin:0 0;-webkit-text-stroke:0.2px currentColor;">#search</div>
<svg style="left:921.10px;top:458.82px" width="5" height="4" viewBox="0 0 5 4"><path d="M0.6 0.8L2.5 2.8L4.4 0.8" fill="none" stroke="#8e8e8e" stroke-width="0.8"/></svg>
<svg style="left:927.50px;top:455.72px" width="17.00" height="12" viewBox="0 0 17.00 12"><polygon points="0.5,0.5 12.00,0.5 14.90,4.90 12.00,9.30 0.5,9.30" fill="none" stroke="#939393" stroke-width="0.8"/></svg>
<div style="left:930.30px;top:457.65px;font:normal 6.80px/6.80px 'Liberation Sans';color:#a4a4a4;white-space:pre;transform:scaleX(0.861);transform-origin:0 0;-webkit-text-stroke:0.2px currentColor;">div</div>
<div style="left:944.60px;top:457.66px;font:normal 7.00px/7.00px 'Liberation Sans';color:#a4a4a4;white-space:pre;transform:scaleX(0.845);transform-origin:0 0;-webkit-text-stroke:0.2px currentColor;">#menubar</div>
<svg style="left:928.90px;top:471.62px" width="4" height="5" viewBox="0 0 4 5"><path d="M0.8 0.6L2.8 2.5L0.8 4.4" fill="none" stroke="#8e8e8e" stroke-width="0.8"/></svg>
<svg style="left:934.90px;top:469.22px" width="18.60" height="12" viewBox="0 0 18.60 12"><polyline points="1.9,10.90 14.40,10.90 17.30,6.50" fill="none" stroke="#8a8a8a" stroke-width="0.75"/><polygon points="0.5,0.5 13.60,0.5 16.50,4.90 13.60,9.30 0.5,9.30" fill="none" stroke="#939393" stroke-width="0.8"/></svg>
<div style="left:938.00px;top:471.16px;font:normal 6.80px/6.80px 'Liberation Sans';color:#a4a4a4;white-space:pre;transform:scaleX(0.779);transform-origin:0 0;-webkit-text-stroke:0.2px currentColor;">nav</div>
<div style="left:953.90px;top:471.16px;font:normal 7.00px/7.00px 'Liberation Sans';color:#a4a4a4;white-space:pre;transform:scaleX(0.859);transform-origin:0 0;-webkit-text-stroke:0.2px currentColor;">.menu</div>
<svg style="left:928.70px;top:485.82px" width="5" height="4" viewBox="0 0 5 4"><path d="M0.6 0.8L2.5 2.8L4.4 0.8" fill="none" stroke="#8e8e8e" stroke-width="0.8"/></svg>
<svg style="left:934.90px;top:482.72px" width="18.40" height="12" viewBox="0 0 18.40 12"><polygon points="0.5,0.5 13.40,0.5 16.30,4.90 13.40,9.30 0.5,9.30" fill="none" stroke="#939393" stroke-width="0.8"/></svg>
<div style="left:937.90px;top:484.66px;font:normal 6.80px/6.80px 'Liberation Sans';color:#a4a4a4;white-space:pre;transform:scaleX(0.779);transform-origin:0 0;-webkit-text-stroke:0.2px currentColor;">nav</div>
<div style="left:954.00px;top:484.66px;font:normal 7.00px/7.00px 'Liberation Sans';color:#a4a4a4;white-space:pre;transform:scaleX(0.849);transform-origin:0 0;-webkit-text-stroke:0.2px currentColor;">.menu</div>
<svg style="left:942.50px;top:496.23px" width="16.30" height="12" viewBox="0 0 16.30 12"><polygon points="0.5,0.5 11.30,0.5 14.20,4.90 11.30,9.30 0.5,9.30" fill="none" stroke="#939393" stroke-width="0.8"/></svg>
<div style="left:945.70px;top:498.16px;font:normal 6.80px/6.80px 'Liberation Sans';color:#a4a4a4;white-space:pre;transform:scaleX(0.835);transform-origin:0 0;-webkit-text-stroke:0.2px currentColor;">h2</div>
<svg style="left:942.50px;top:509.73px" width="16.00" height="12" viewBox="0 0 16.00 12"><polygon points="0.5,0.5 11.00,0.5 13.90,4.90 11.00,9.30 0.5,9.30" fill="none" stroke="#939393" stroke-width="0.8"/></svg>
<div style="left:945.80px;top:511.67px;font:normal 6.80px/6.80px 'Liberation Sans';color:#a4a4a4;white-space:pre;transform:scaleX(0.885);transform-origin:0 0;-webkit-text-stroke:0.2px currentColor;">hr</div>
<svg style="left:936.70px;top:526.34px" width="5" height="4" viewBox="0 0 5 4"><path d="M0.6 0.8L2.5 2.8L4.4 0.8" fill="none" stroke="#8e8e8e" stroke-width="0.8"/></svg>
<svg style="left:942.50px;top:523.24px" width="14.80" height="12" viewBox="0 0 14.80 12"><polygon points="0.5,0.5 9.80,0.5 12.70,4.90 9.80,9.30 0.5,9.30" fill="none" stroke="#939393" stroke-width="0.8"/></svg>
<div style="left:945.45px;top:525.17px;font:normal 6.80px/6.80px 'Liberation Sans';color:#a4a4a4;white-space:pre;transform:scaleX(0.952);transform-origin:0 0;-webkit-text-stroke:0.2px currentColor;">ul</div>
<svg style="left:944.10px;top:539.84px" width="5" height="4" viewBox="0 0 5 4"><path d="M0.6 0.8L2.5 2.8L4.4 0.8" fill="none" stroke="#8e8e8e" stroke-width="0.8"/></svg>
<svg style="left:950.20px;top:536.74px" width="12.50" height="12" viewBox="0 0 12.50 12"><polygon points="0.5,0.5 7.50,0.5 10.40,4.90 7.50,9.30 0.5,9.30" fill="none" stroke="#939393" stroke-width="0.8"/></svg>
<div style="left:953.00px;top:538.68px;font:normal 6.80px/6.80px 'Liberation Sans';color:#a4a4a4;white-space:pre;transform:scaleX(0.997);transform-origin:0 0;-webkit-text-stroke:0.2px currentColor;">li</div>
<svg style="left:957.80px;top:550.24px" width="12.70" height="12" viewBox="0 0 12.70 12"><polygon points="0.5,0.5 7.70,0.5 10.60,4.90 7.70,9.30 0.5,9.30" fill="none" stroke="#939393" stroke-width="0.8"/></svg>
<div style="left:960.70px;top:552.18px;font:normal 6.80px/6.80px 'Liberation Sans';color:#a4a4a4;white-space:pre;transform:scaleX(0.875);transform-origin:0 0;-webkit-text-stroke:0.2px currentColor;">a</div>
<svg style="left:944.30px;top:566.15px" width="4" height="5" viewBox="0 0 4 5"><path d="M0.8 0.6L2.8 2.5L0.8 4.4" fill="none" stroke="#8e8e8e" stroke-width="0.8"/></svg>
<svg style="left:950.20px;top:563.75px" width="12.50" height="12" viewBox="0 0 12.50 12"><polyline points="1.9,10.90 8.30,10.90 11.20,6.50" fill="none" stroke="#8a8a8a" stroke-width="0.75"/><polygon points="0.5,0.5 7.50,0.5 10.40,4.90 7.50,9.30 0.5,9.30" fill="none" stroke="#939393" stroke-width="0.8"/></svg>
<div style="left:953.00px;top:565.68px;font:normal 6.80px/6.80px 'Liberation Sans';color:#a4a4a4;white-space:pre;transform:scaleX(0.997);transform-origin:0 0;-webkit-text-stroke:0.2px currentColor;">li</div>
<svg style="left:944.10px;top:580.35px" width="5" height="4" viewBox="0 0 5 4"><path d="M0.6 0.8L2.5 2.8L4.4 0.8" fill="none" stroke="#8e8e8e" stroke-width="0.8"/></svg>
<svg style="left:950.20px;top:577.25px" width="12.50" height="12" viewBox="0 0 12.50 12"><polygon points="0.5,0.5 7.50,0.5 10.40,4.90 7.50,9.30 0.5,9.30" fill="none" stroke="#939393" stroke-width="0.8"/></svg>
<div style="left:953.00px;top:579.19px;font:normal 6.80px/6.80px 'Liberation Sans';color:#a4a4a4;white-space:pre;transform:scaleX(0.997);transform-origin:0 0;-webkit-text-stroke:0.2px currentColor;">li</div>
<svg style="left:957.80px;top:590.76px" width="12.70" height="12" viewBox="0 0 12.70 12"><polygon points="0.5,0.5 7.70,0.5 10.60,4.90 7.70,9.30 0.5,9.30" fill="none" stroke="#939393" stroke-width="0.8"/></svg>
<div style="left:960.70px;top:592.69px;font:normal 6.80px/6.80px 'Liberation Sans';color:#a4a4a4;white-space:pre;transform:scaleX(0.875);transform-origin:0 0;-webkit-text-stroke:0.2px currentColor;">a</div>
<svg style="left:944.30px;top:606.66px" width="4" height="5" viewBox="0 0 4 5"><path d="M0.8 0.6L2.8 2.5L0.8 4.4" fill="none" stroke="#8e8e8e" stroke-width="0.8"/></svg>
<svg style="left:950.20px;top:604.26px" width="12.50" height="12" viewBox="0 0 12.50 12"><polyline points="1.9,10.90 8.30,10.90 11.20,6.50" fill="none" stroke="#8a8a8a" stroke-width="0.75"/><polygon points="0.5,0.5 7.50,0.5 10.40,4.90 7.50,9.30 0.5,9.30" fill="none" stroke="#939393" stroke-width="0.8"/></svg>
<div style="left:953.00px;top:606.20px;font:normal 6.80px/6.80px 'Liberation Sans';color:#a4a4a4;white-space:pre;transform:scaleX(0.997);transform-origin:0 0;-webkit-text-stroke:0.2px currentColor;">li</div>
<div style="left:872px;top:607.5px;width:152px;height:6.5px;background:#434343"></div>
<div style="left:872.7px;top:609.5px;width:116px;height:4px;background:#4b4b4b;border-radius:2px"></div>
</body></html>
